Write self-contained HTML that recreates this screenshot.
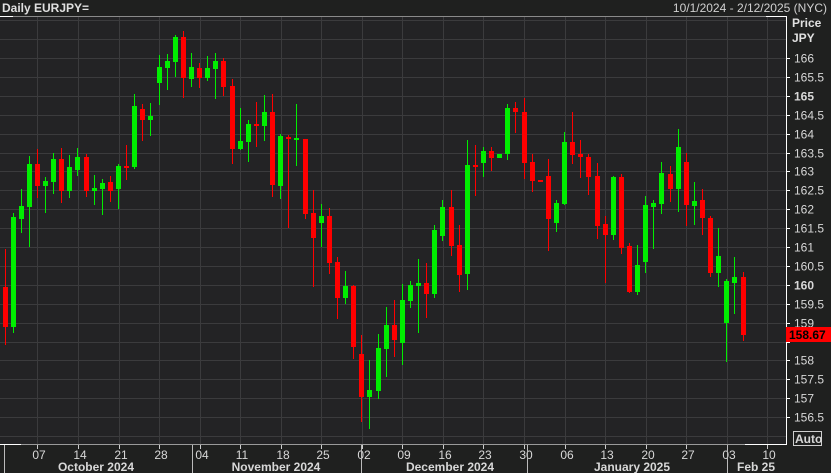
<!DOCTYPE html>
<html><head><meta charset="utf-8"><style>
html,body{margin:0;padding:0;background:#1f201f;width:831px;height:473px;overflow:hidden;font-family:"Liberation Sans",sans-serif}
svg{position:absolute;left:0;top:0}
</style></head><body>
<svg id="s" width="831" height="473" xmlns="http://www.w3.org/2000/svg">
<rect x="0" y="0" width="831" height="473" fill="#1f201f"/>
<rect x="0" y="16" width="786" height="428" fill="#232325"/>
<g id="grid" stroke="#3b3b3d" stroke-width="1"></g>
<g id="c"></g>
<line x1="0" y1="16.5" x2="786" y2="16.5" stroke="#8a8a8a"/>
<line x1="0" y1="16.5" x2="13" y2="16.5" stroke="#fff"/>
<line x1="766" y1="16.5" x2="786" y2="16.5" stroke="#fff"/>
<line x1="786.5" y1="16" x2="786.5" y2="445" stroke="#fff"/>
<line x1="0" y1="444.5" x2="786" y2="444.5" stroke="#9a9a9a"/>
<line x1="0" y1="444.5" x2="21" y2="444.5" stroke="#fff"/>
<line x1="745" y1="444.5" x2="786" y2="444.5" stroke="#fff"/>
<g id="ax" font-size="12" fill="#d8d8d8"></g>
<text x="2" y="12" font-size="12" font-weight="bold" fill="#e0e0e0">Daily EURJPY=</text>
<text x="827" y="12" font-size="12" fill="#d0d0d0" text-anchor="end">10/1/2024 - 2/12/2025 (NYC)</text>
<text x="792" y="27" font-size="12" font-weight="bold" fill="#e0e0e0">Price</text>
<text x="792" y="42" font-size="12" font-weight="bold" fill="#e0e0e0">JPY</text>
<rect x="786" y="327" width="45" height="15" fill="#ff0000"/>
<text x="789" y="339" font-size="12" font-weight="bold" fill="#000">158.67</text>
<rect x="793.5" y="431.5" width="28" height="14" fill="none" stroke="#cfcfcf"/>
<text x="795" y="443" font-size="12" font-weight="bold" fill="#d8d8d8">Auto</text>
</svg>
<script>
var NS="http://www.w3.org/2000/svg";
function el(p,t,a,txt){var e=document.createElementNS(NS,t);for(var k in a)e.setAttribute(k,a[k]);if(txt!==undefined)e.textContent=txt;p.appendChild(e);return e;}
var g=document.getElementById('grid'),ax=document.getElementById('ax'),c=document.getElementById('c');
var wk=[37,78,119,159,200,240,281,321,362,402,443,483,524,565,605,646,686,727,767];
var lab=["07","14","21","28","04","11","18","25","02","09","16","23","30","06","13","20","27","03","10"];
wk.forEach(function(x,i){el(g,'line',{x1:x+.5,y1:17,x2:x+.5,y2:444});
 el(ax,'line',{x1:x+.5,y1:445,x2:x+.5,y2:449,stroke:'#ccc'});
 el(ax,'text',{x:x+2,y:459,'text-anchor':'middle'},lab[i]);});
for(var k=-2;k<=20;k++){var y=Math.round(58+k*18.9)+.5;el(g,'line',{x1:0,y1:y,x2:786,y2:y});
 if(y>50&&y<430){var p=166-k*0.5;el(ax,'line',{x1:786,y1:y,x2:790,y2:y,stroke:'#fff'});
 var t=(p%1===0)?String(p):p.toFixed(1);
 if(p!==158.5)el(ax,'text',{x:794,y:y+4,'font-weight':(p%5===0)?'bold':'normal'},t);}}
[4,192,361,527,727].forEach(function(x){el(ax,'line',{x1:x+.5,y1:445,x2:x+.5,y2:473,stroke:'#bbb'});});
[[96,"October 2024"],[276,"November 2024"],[450,"December 2024"],[632,"January 2025"],[756,"Feb 25"]].forEach(function(m){el(ax,'text',{x:m[0],y:471,'text-anchor':'middle','font-weight':'bold'},m[1]);});
var d=[
['r',287,327,249,345],['g',217,327,213,333],['g',206,219,189,233],['g',164,207,156,247],['r',164,186,149,198],
['g',181,186,177,213],['g',159,182,153,194],['r',159,191,148,203],['g',167,191,155,198],['g',157,170,148,176],
['r',157,191,154,197],['g',188,191,175,205],['g',183,189,179,215],['r',182,191,176,202],['g',166,189,164,209],
['r',166,167,145,180],['g',106,167,94,169],['r',109,120,104,141],['g',116,120,103,136],['g',67,83,55,105],
['g',61,68,54,90],['g',37,62,35,77],['r',37,78,31,98],['g',67,79,53,87],['r',68,78,63,88],
['g',68,78,56,81],['g',61,69,53,99],['r',61,87,58,96],['r',86,149,79,164],['g',141,149,108,150],
['g',124,142,120,162],['r',124,126,102,147],['g',112,126,95,141],['r',112,185,94,197],['g',136,186,134,199],
['r',137,139,135,228],['g',138,140,104,166],['r',139,214,139,219],['r',213,238,190,287],['g',216,223,204,247],
['r',216,263,208,274],['r',262,298,257,319],['g',286,298,271,304],['r',286,347,285,359],['r',354,397,335,422],
['g',390,397,360,429],['g',348,391,334,399],['g',325,349,307,377],['r',325,340,300,357],['g',300,343,284,365],
['g',285,301,281,308],['g',283,286,259,333],['r',283,294,263,318],['g',230,294,225,298],['g',207,236,200,241],
['r',207,246,190,256],['r',245,275,225,292],['g',165,274,140,290],['r',165,167,145,196],['g',151,163,147,177],
['r',151,158,147,171],['g',154,158,154,158],['g',108,154,104,160],['r',108,112,102,133],['r',112,163,98,179],
['r',162,181,154,192],['r',180,181,180,181],['r',176,219,159,251],['g',203,223,200,232],['g',142,204,132,205],
['r',142,155,112,164],['r',154,157,140,178],['r',157,177,154,195],['r',176,226,163,239],['r',224,235,216,283],
['g',177,235,176,240],['r',177,248,174,254],['r',246,292,243,293],['g',265,292,245,295],['g',205,262,196,273],
['g',203,207,200,249],['g',173,204,162,214],['r',174,189,166,202],['g',147,189,129,212],['r',162,205,153,226],
['g',201,206,182,225],['r',200,218,189,235],['r',218,273,216,277],['g',256,273,228,287],['g',281,323,279,362],
['g',277,283,257,314],['r',277,335,272,341]];
d.forEach(function(v,i){var x=Math.round(4.5+i*8.11);var col=v[0]=='g'?'#00ee00':'#ff0000';
 el(c,'rect',{x:x,y:v[3],width:1,height:Math.max(1,v[4]-v[3]),fill:col});
 el(c,'rect',{x:x-2,y:v[1],width:5,height:Math.max(2,v[2]-v[1]),fill:col});});
</script>
</body></html>
